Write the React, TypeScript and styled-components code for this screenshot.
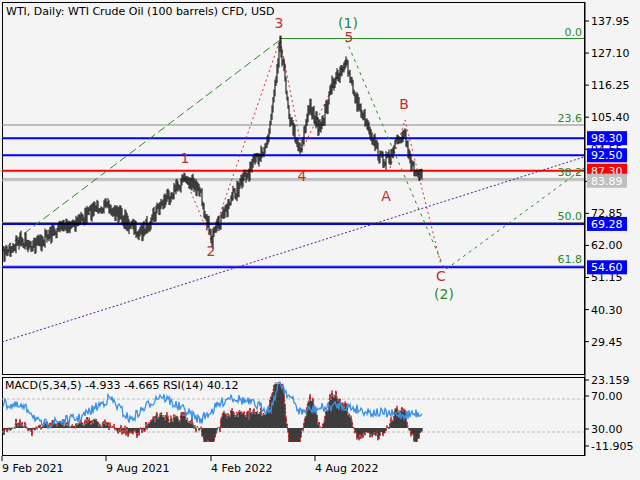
import React from "react";
import styled, { createGlobalStyle } from "styled-components";

const G = createGlobalStyle`
  html,body{margin:0;padding:0;background:#f4f4f4;}
  body{font-family:"DejaVu Sans",Tahoma,sans-serif;}
`;
const Page = styled.div`width:640px;height:480px;position:relative;background:#f4f4f4;overflow:hidden;`;
const Chart = styled.svg`display:block;`;

const yP = (p: number) => 21 + (137.95 - p) * 2.955;

function rnd(seed: number) {
  let s = seed;
  return () => { s = (s * 16807) % 2147483647; return s / 2147483647; };
}
const keys: [number, number][] = [[3,255],[20,240],[35,245],[60,228],[80,220],[100,205],[120,215],[140,235],[160,205],[185,178],[200,192],[212,240],[230,200],[250,170],[268,140],[280,40],[290,120],[300,150],[310,105],[320,132],[332,85],[345,62],[356,100],[368,125],[380,158],[390,160],[398,140],[405,132],[412,168],[422,180]];
const r = rnd(7);
const pts: [number, number][] = [];
for (let x = 3; x <= 422; x++) {
  let i = 0; while (keys[i + 1][0] < x) i++;
  const [x0, y0] = keys[i], [x1, y1] = keys[i + 1];
  const y = y0 + (y1 - y0) * (x - x0) / (x1 - x0) + (r() - 0.5) * 12;
  pts.push([x, y]);
}
const bars = pts.map(([x, y], i) => {
  const h = 3 + r() * 8;
  const prev = i ? pts[i - 1][1] : y;
  return `M${x} ${Math.min(y, prev) - h / 2}V${Math.max(y, prev) + h / 2}`;
}).join("");

const mk: [number, number][] = [[3,403],[30,410],[40,425],[80,418],[110,398],[130,420],[160,395],[200,420],[230,396],[270,410],[280,382],[300,412],[340,405],[370,412],[400,415],[422,413]];
const rsi: [number, number][] = [];
for (let x = 3; x <= 422; x++) {
  let i = 0; while (mk[i + 1][0] < x) i++;
  const [x0, y0] = mk[i], [x1, y1] = mk[i + 1];
  rsi.push([x, y0 + (y1 - y0) * (x - x0) / (x1 - x0) + (r() - 0.5) * 10]);
}
const zero = 428;
const hist = pts.map(([x], i) => {
  const base = pts[Math.max(0, i - 12)][1];
  const v = (base - pts[i][1]) * 0.5 + (235 - pts[i][1]) * 0.08;
  const h = Math.max(-14, Math.min(44, v));
  return [x, zero - h] as [number, number];
});
const histPath = hist.map(([x, y]) => `M${x} ${zero}V${y}`).join("");
const sigPath = "M" + hist.map(([x, y]) => `${x} ${y - 1}`).join("L");
const rsiPath = "M" + rsi.map(([x, y]) => `${x.toFixed(0)} ${y.toFixed(1)}`).join("L");

const axis = [137.95, 127.1, 116.25, 105.4, 94.55, 83.7, 72.85, 62.0, 51.15, 40.3, 29.45];
const tags: [number, string, string][] = [[98.3, "#0000ff", "#fff"], [92.5, "#0000ff", "#fff"], [87.3, "#ff0000", "#fff"], [83.89, "#c0c0c0", "#fff"], [69.28, "#0000ff", "#fff"], [54.6, "#0000ff", "#fff"]];
const fibs: [number, string][] = [[38.5, "0.0"], [125, "23.6"], [179, "38.2"], [222.5, "50.0"], [266, "61.8"]];
const T = { fontFamily: "DejaVu Sans, sans-serif", fontSize: 11 } as const;

export default function App() {
  return (
    <Page>
      <G />
      <Chart width={640} height={480} viewBox="0 0 640 480">
        <rect x={2.5} y={2.5} width={582} height={372} fill="none" stroke="#000" />
        <rect x={2.5} y={377.5} width={582} height={78} fill="none" stroke="#000" />
        {fibs.map(([y], i) => <line key={i} x1={i ? 2 : 280} x2={584} y1={y} y2={y} stroke={i ? "#888" : "#2a8a2a"} strokeWidth={1} />)}
        <line x1={2} x2={584} y1={yP(98.3)} y2={yP(98.3)} stroke="#0000ff" strokeWidth={2} />
        <line x1={2} x2={584} y1={yP(92.5)} y2={yP(92.5)} stroke="#0000ff" strokeWidth={2} />
        <line x1={2} x2={584} y1={yP(69.28)} y2={yP(69.28)} stroke="#0000ff" strokeWidth={2} />
        <line x1={2} x2={584} y1={yP(54.6)} y2={yP(54.6)} stroke="#0000ff" strokeWidth={2} />
        <line x1={2} x2={584} y1={yP(87.3)} y2={yP(87.3)} stroke="#ff0000" strokeWidth={2} />
        <line x1={2} x2={584} y1={yP(83.89)} y2={yP(83.89)} stroke="#bbb" />
        <line x1={5} y1={248} x2={280} y2={40} stroke="#2a8a2a" strokeDasharray="8 4" />
        <line x1={2} y1={342} x2={584} y2={157} stroke="#5a1a9a" strokeDasharray="2 2" />
        <polyline points="185,178 211,240 280,40 302,150 346,60" fill="none" stroke="#d03030" strokeDasharray="2 3" />
        <polyline points="390,168 405,120 441,265" fill="none" stroke="#d03030" strokeDasharray="2 3" />
        <polyline points="346,40 445,270 584,168" fill="none" stroke="#2a8a2a" strokeDasharray="3 4" />
        <path d={bars} stroke="#000" strokeWidth={1} />
        {fibs.map(([y, t]) => <text key={t} x={582} y={y - 3} textAnchor="end" fill="#2a8a2a" style={T}>{t}</text>)}
        <g fill="#c03030" style={{ ...T, fontSize: 14 }}>
          <text x={279} y={28} textAnchor="middle">3</text>
          <text x={349} y={42} textAnchor="middle">5</text>
          <text x={185} y={163} textAnchor="middle">1</text>
          <text x={211} y={256} textAnchor="middle">2</text>
          <text x={302} y={181} textAnchor="middle">4</text>
          <text x={404} y={109} textAnchor="middle">B</text>
          <text x={386} y={201} textAnchor="middle">A</text>
          <text x={441} y={281} textAnchor="middle">C</text>
        </g>
        <g fill="#2a8a2a" style={{ ...T, fontSize: 14 }}>
          <text x={348} y={28} textAnchor="middle">(1)</text>
          <text x={444} y={299} textAnchor="middle">(2)</text>
        </g>
        <text x={6} y={15} style={T} fill="#000">WTI, Daily:  WTI Crude Oil (100 barrels) CFD, USD</text>
        <line x1={585} x2={585} y1={2} y2={456} stroke="#000" />
        {axis.map(p => <g key={p}><line x1={585} x2={589} y1={yP(p)} y2={yP(p)} stroke="#000" /><text x={591} y={yP(p) + 4} style={T}>{p.toFixed(2)}</text></g>)}
        {tags.map(([p, bg, fg]) => <g key={p}><rect x={587} y={yP(p) - 7} width={40} height={14} fill={bg} /><text x={591} y={yP(p) + 4} style={T} fill={fg}>{p.toFixed(2)}</text></g>)}
        <line x1={2} x2={584} y1={399} y2={399} stroke="#bbb" strokeDasharray="3 2" />
        <line x1={2} x2={584} y1={432} y2={432} stroke="#bbb" strokeDasharray="3 2" />
        <path d={histPath} stroke="#000" strokeWidth={1} />
        <path d={sigPath} fill="none" stroke="#e00" strokeWidth={1} strokeDasharray="2 2" />
        <path d={rsiPath} fill="none" stroke="#3a90e8" strokeWidth={1.3} />
        <text x={5} y={389} style={T}>MACD(5,34,5) -4.933 -4.665 RSI(14) 40.12</text>
        {[[23.159, 384], [70, 400], [30, 433], [-11.905, 450]].map(([v, y]) => <g key={v}><line x1={585} x2={589} y1={y - 4} y2={y - 4} stroke="#000" /><text x={591} y={y} style={T}>{v === 23.159 || v === -11.905 ? v.toFixed(3) : v.toFixed(2)}</text></g>)}
        {[[2, "9 Feb 2021"], [106, "9 Aug 2021"], [211, "4 Feb 2022"], [315, "4 Aug 2022"]].map(([x, t]) => <g key={t as string}><line x1={x as number} x2={x as number} y1={456} y2={461} stroke="#000" /><text x={(x as number)} y={472} style={T}>{t}</text></g>)}
      </Chart>
    </Page>
  );
}
